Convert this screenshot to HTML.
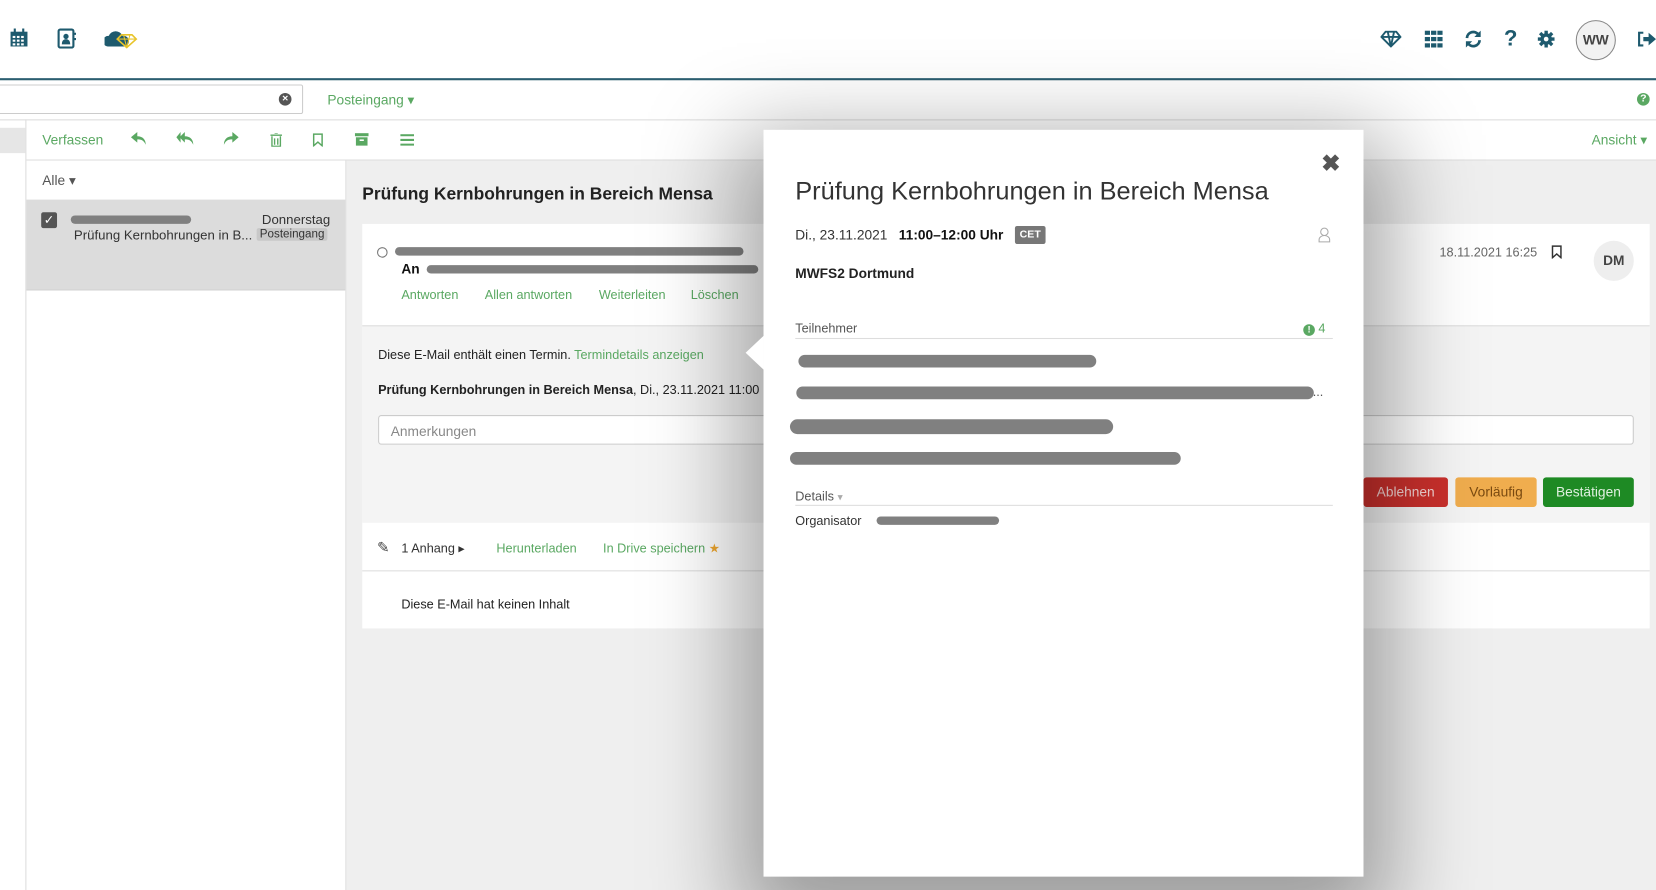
<!DOCTYPE html>
<html><head><meta charset="utf-8"><style>
*{box-sizing:border-box;margin:0;padding:0}
html,body{width:1656px;height:890px;overflow:hidden;background:#fff}
#w{position:absolute;left:0;top:0;width:1568px;height:843px;transform:scale(1.05612);transform-origin:0 0;font-family:"Liberation Sans",sans-serif;font-size:12px;color:#333}
.a{position:absolute}
.g{color:#5aa862}
.t{color:#1e5a6e}
.blob{position:absolute;background:#808080;border-radius:8px;height:9px}
.btn{position:absolute;top:452px;height:28px;border-radius:3px;font-size:13px;text-align:center;line-height:28px}
</style></head><body><div id="w">
<!-- header -->
<div class="a" style="left:0;top:74px;width:1568px;height:2px;background:#2b5e70"></div>
<svg class="a" style="left:9px;top:27px" width="18" height="18" viewBox="0 0 18 18"><rect x="1" y="3" width="16" height="14" fill="#1e5a6e"/><rect x="4" y="0" width="2" height="5" fill="#1e5a6e"/><rect x="12" y="0" width="2" height="5" fill="#1e5a6e"/><g fill="#fff"><rect x="3" y="7" width="2.5" height="2"/><rect x="7" y="7" width="2.5" height="2"/><rect x="11" y="7" width="2.5" height="2"/><rect x="3" y="10.5" width="2.5" height="2"/><rect x="7" y="10.5" width="2.5" height="2"/><rect x="11" y="10.5" width="2.5" height="2"/><rect x="3" y="14" width="2.5" height="2"/><rect x="7" y="14" width="2.5" height="2"/><rect x="11" y="14" width="2.5" height="2"/></g></svg>
<svg class="a" style="left:54px;top:27px" width="18" height="19" viewBox="0 0 18 19"><rect x="1.5" y="1" width="14" height="17" rx="1.5" fill="none" stroke="#1e5a6e" stroke-width="2"/><circle cx="8.5" cy="7.5" r="2.5" fill="#1e5a6e"/><path d="M4.5 15 q0-5 4-5 q4 0 4 5z" fill="#1e5a6e"/><rect x="16" y="4" width="2" height="2" fill="#1e5a6e"/><rect x="16" y="9" width="2" height="2" fill="#1e5a6e"/></svg>
<svg class="a" style="left:99px;top:28px" width="32" height="18" viewBox="0 0 32 18"><path d="M3 16 a5 5 0 0 1 1-10 a7 7 0 0 1 13 0 a5 5 0 0 1 2 10z" fill="#1e5a6e"/><path d="M16 5 h10 l4 4 -9 8 -9-8z" fill="none" stroke="#e8c42a" stroke-width="1.5"/><path d="M12 9h18M18 5l3 12 3-12" stroke="#e8c42a" stroke-width="1" fill="none"/></svg>
<svg class="a" style="left:1307px;top:29px" width="20" height="16" viewBox="0 0 20 16"><path d="M5 1h10l4 5-9 9-9-9z M1 6h18 M7 1l3 14 3-14" fill="none" stroke="#1e5a6e" stroke-width="1.8"/></svg>
<svg class="a" style="left:1349px;top:29px" width="17" height="16" viewBox="0 0 17 16"><g fill="#1e5a6e"><rect x="0" y="0" width="5" height="4"/><rect x="6" y="0" width="5" height="4"/><rect x="12" y="0" width="5" height="4"/><rect x="0" y="6" width="5" height="4"/><rect x="6" y="6" width="5" height="4"/><rect x="12" y="6" width="5" height="4"/><rect x="0" y="12" width="5" height="4"/><rect x="6" y="12" width="5" height="4"/><rect x="12" y="12" width="5" height="4"/></g></svg>
<svg class="a" style="left:1386px;top:28px" width="18" height="18" viewBox="0 0 18 18"><path d="M3 8a6 6 0 0 1 11-3 M15 10a6 6 0 0 1-11 3" fill="none" stroke="#1e5a6e" stroke-width="2.6"/><path d="M16 1v6h-6z M2 17v-6h6z" fill="#1e5a6e"/></svg>
<div class="a t" style="left:1424px;top:25px;font-size:21px;font-weight:bold">?</div>
<svg class="a" style="left:1456px;top:29px" width="16" height="16" viewBox="0 0 16 16"><g stroke="#1e5a6e" stroke-width="3.2"><path d="M8 0v16M0 8h16M2.3 2.3l11.4 11.4M13.7 2.3L2.3 13.7"/></g><circle cx="8" cy="8" r="5.5" fill="#1e5a6e"/><circle cx="8" cy="8" r="2.2" fill="#fff"/></svg>
<div class="a" style="left:1492px;top:19px;width:38px;height:38px;border-radius:50%;border:1.5px solid #888;background:#f2f2f2;text-align:center;line-height:35px;font-weight:bold;font-size:13px;color:#444">WW</div>
<svg class="a" style="left:1550px;top:30px" width="18" height="14" viewBox="0 0 18 14"><path d="M6 1H2v12h4" fill="none" stroke="#1e5a6e" stroke-width="2"/><path d="M6 5h5V1l7 6-7 6V9H6z" fill="#1e5a6e"/></svg>
<!-- row 2 -->
<div class="a" style="left:-5px;top:80px;width:292px;height:28px;border:1px solid #ccc;border-radius:2px;background:#fff"></div>
<div class="a" style="left:264px;top:88px;width:12px;height:12px;border-radius:50%;background:#555;color:#fff;font-size:10px;line-height:12px;text-align:center;font-weight:bold">×</div>
<div class="a g" style="left:310px;top:87px;font-size:13px">Posteingang ▾</div>
<div class="a" style="left:1550px;top:88px;width:12px;height:12px;border-radius:50%;background:#5aa862;color:#fff;font-size:10px;font-weight:bold;text-align:center;line-height:12px">?</div>
<div class="a" style="left:0;top:113px;width:1568px;height:1px;background:#ddd"></div>
<!-- left strip -->
<div class="a" style="left:0;top:121px;width:24px;height:24px;background:#e6e6e6"></div>
<div class="a" style="left:24px;top:113px;width:1px;height:730px;background:#ddd"></div>
<!-- toolbar -->
<div class="a g" style="left:40px;top:125px;font-size:13px">Verfassen</div>
<svg class="a" style="left:124px;top:125px" width="15" height="13" viewBox="0 0 15 13"><path d="M6 0L0 5l6 5V7c4 0 6 1 8 5 0-5-3-8-8-8z" fill="#5aa862"/></svg>
<svg class="a" style="left:167px;top:125px" width="17" height="13" viewBox="0 0 17 13"><path d="M4 0L0 5l4 5z" fill="#5aa862"/><path d="M8 0L3 5l5 5V7c4 0 6 1 8 5 0-5-3-8-8-8z" fill="#5aa862"/></svg>
<svg class="a" style="left:211px;top:125px" width="15" height="13" viewBox="0 0 15 13"><path d="M9 0l6 5-6 5V7c-4 0-6 1-8 5 0-5 3-8 8-8z" fill="#5aa862"/></svg>
<svg class="a" style="left:256px;top:126px" width="11" height="13" viewBox="0 0 11 13"><path d="M0 2h11M4 0h3M1.5 3v9.5h8V3M4 5v6M7 5v6" fill="none" stroke="#5aa862" stroke-width="1.3"/></svg>
<svg class="a" style="left:296px;top:126px" width="10" height="13" viewBox="0 0 10 13"><path d="M1 1h8v11l-4-3.5-4 3.5z" fill="none" stroke="#5aa862" stroke-width="1.4"/></svg>
<svg class="a" style="left:336px;top:126px" width="13" height="12" viewBox="0 0 13 12"><rect x="0" y="0" width="13" height="3" fill="#5aa862"/><rect x="1" y="4" width="11" height="8" fill="#5aa862"/><rect x="4.5" y="6" width="4" height="1.5" fill="#fff"/></svg>
<svg class="a" style="left:379px;top:127px" width="13" height="11" viewBox="0 0 13 11"><g fill="#5aa862"><rect y="0" width="13" height="2"/><rect y="4.5" width="13" height="2"/><rect y="9" width="13" height="2"/></g></svg>
<div class="a g" style="left:1507px;top:125px;font-size:13px">Ansicht ▾</div>
<div class="a" style="left:25px;top:151px;width:1543px;height:1px;background:#ddd"></div>
<!-- list -->
<div class="a" style="left:40px;top:163px;font-size:13px;color:#555">Alle ▾</div>
<div class="a" style="left:25px;top:189px;width:302px;height:85px;background:#dcdcdc"></div>
<div class="a" style="left:39px;top:201px;width:15px;height:15px;border-radius:2px;background:#555;color:#fff;font-size:12px;text-align:center;line-height:15px">✓</div>
<div class="blob" style="left:67px;top:204px;width:114px;height:8px"></div>
<div class="a" style="left:70px;top:216px;font-size:12.5px;color:#333">Prüfung Kernbohrungen in B...</div>
<div class="a" style="left:248px;top:201px;font-size:12.5px;color:#333">Donnerstag</div>
<div class="a" style="left:243px;top:216px;padding:0 3px;background:#c8c8c8;font-size:11px;border-radius:2px;color:#333">Posteingang</div>
<div class="a" style="left:25px;top:274px;width:302px;height:1px;background:#ccc"></div>
<div class="a" style="left:327px;top:152px;width:1px;height:691px;background:#ddd"></div>
<!-- detail -->
<div class="a" style="left:328px;top:152px;width:1240px;height:691px;background:#efefef"></div>
<div class="a" style="left:343px;top:175px;font-size:16.5px;font-weight:bold;color:#222">Prüfung Kernbohrungen in Bereich Mensa</div>
<div class="a" style="left:343px;top:212px;width:1219px;height:383px;background:#fff"></div>
<div class="a" style="left:343px;top:308px;width:1219px;height:187px;background:#f4f4f4;border-top:1px solid #ddd"></div>
<div class="a" style="left:343px;top:540px;width:1219px;height:1px;background:#ddd"></div>
<div class="a" style="left:357px;top:234px;width:10px;height:10px;border-radius:50%;border:1px solid #777"></div>
<div class="blob" style="left:374px;top:234px;width:330px;height:8px"></div>
<div class="a" style="left:380px;top:247px;font-weight:bold;font-size:13px;color:#111">An</div>
<div class="blob" style="left:404px;top:251px;width:314px;height:8px"></div>
<div class="a g" style="left:380px;top:272px">Antworten</div>
<div class="a g" style="left:459px;top:272px">Allen antworten</div>
<div class="a g" style="left:567px;top:272px">Weiterleiten</div>
<div class="a g" style="left:654px;top:272px">Löschen</div>
<div class="a" style="left:1363px;top:232px;color:#666">18.11.2021 16:25</div>
<svg class="a" style="left:1469px;top:232px" width="10" height="13" viewBox="0 0 10 13"><path d="M1 1h8v11l-4-3.5-4 3.5z" fill="none" stroke="#333" stroke-width="1.4"/></svg>
<div class="a" style="left:1509px;top:228px;width:38px;height:38px;border-radius:50%;background:#eee;text-align:center;line-height:38px;font-weight:bold;font-size:13px;color:#444">DM</div>
<div class="a" style="left:358px;top:329px;color:#222">Diese E-Mail enthält einen Termin. <span class="g">Termindetails anzeigen</span></div>
<div class="a" style="left:358px;top:362px;color:#222"><b>Prüfung Kernbohrungen in Bereich Mensa</b>, Di., 23.11.2021 11:00</div>
<div class="a" style="left:358px;top:393px;width:1189px;height:28px;border:1px solid #ccc;border-radius:3px;background:#fff;padding:7px 11px;color:#888;font-size:13px">Anmerkungen</div>
<div class="btn" style="left:1291px;width:80px;background:#c9302c;color:#f3d3d2">Ablehnen</div>
<div class="btn" style="left:1378px;width:77px;background:#f0ad4e;color:#7a4a10">Vorläufig</div>
<div class="btn" style="left:1461px;width:86px;background:#1e8a24;color:#e0f0e0">Bestätigen</div>
<div class="a" style="left:357px;top:510px;font-size:14px;color:#444">✎</div>
<div class="a" style="left:380px;top:512px;color:#333">1 Anhang ▸</div>
<div class="a g" style="left:470px;top:512px">Herunterladen</div>
<div class="a g" style="left:571px;top:512px">In Drive speichern <span style="color:#f0a830">★</span></div>
<div class="a" style="left:380px;top:565px;color:#222">Diese E-Mail hat keinen Inhalt</div>
<!-- modal shadow -->
<div class="a" style="left:723px;top:123px;width:568px;height:707px;box-shadow:0 30px 80px 25px rgba(0,0,0,0.35);background:#fff"></div>
<div class="a" style="left:706px;top:318px;width:0;height:0;border-top:16px solid transparent;border-bottom:16px solid transparent;border-right:17px solid #fff"></div>
<div class="a" style="left:723px;top:123px;width:568px;height:707px;background:#fff">
 <div class="a" style="left:528px;top:19px;font-size:22px;font-weight:bold;color:#555">✖</div>
 <div class="a" style="left:30px;top:45px;font-size:24px;color:#333;font-weight:300">Prüfung Kernbohrungen in Bereich Mensa</div>
 <div class="a" style="left:30px;top:92px;font-size:13px;color:#333">Di., 23.11.2021 &nbsp;&nbsp;<b style="color:#111">11:00–12:00 Uhr</b></div>
 <div class="a" style="left:238px;top:91px;width:29px;height:17px;background:#777;color:#fff;font-size:10px;font-weight:bold;text-align:center;line-height:17px;border-radius:2px">CET</div>
 <svg class="a" style="left:525px;top:92px" width="12" height="15" viewBox="0 0 12 15"><circle cx="6" cy="4.5" r="3.5" fill="none" stroke="#aaa"/><path d="M1 14v-2a5 4 0 0 1 10 0v2z" fill="none" stroke="#aaa"/></svg>
 <div class="a" style="left:30px;top:128px;font-weight:bold;font-size:13px;color:#222">MWFS2 Dortmund</div>
 <div class="a" style="left:30px;top:181px;color:#555">Teilnehmer</div>
 <div class="a" style="left:511px;top:181px;color:#5aa862"><span style="display:inline-block;width:11px;height:11px;border-radius:50%;background:#5aa862;color:#fff;font-size:9px;text-align:center;line-height:11px;font-weight:bold">!</span> 4</div>
 <div class="a" style="left:30px;top:197px;width:509px;height:1px;background:#ddd"></div>
 <div class="blob" style="left:33px;top:213px;width:282px;height:12px"></div>
 <div class="blob" style="left:31px;top:243px;width:490px;height:12px"></div>
 <div class="a" style="left:520px;top:241px;color:#555">...</div>
 <div class="blob" style="left:25px;top:274px;width:306px;height:14px"></div>
 <div class="blob" style="left:25px;top:305px;width:370px;height:12px"></div>
 <div class="a" style="left:30px;top:340px;color:#555">Details <span style="color:#aaa;font-size:10px">▾</span></div>
 <div class="a" style="left:30px;top:355px;width:509px;height:1px;background:#ddd"></div>
 <div class="a" style="left:30px;top:363px;color:#333">Organisator</div>
 <div class="blob" style="left:107px;top:366px;width:116px;height:8px"></div>
</div>
</div></body></html>
